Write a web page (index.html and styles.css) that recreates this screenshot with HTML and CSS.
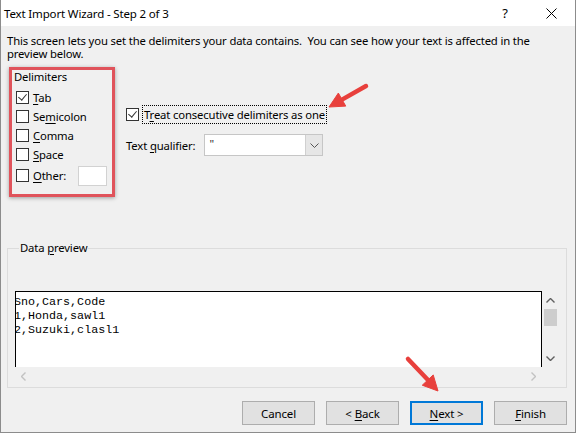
FILE: index.html
```html
<!DOCTYPE html>
<html>
<head>
  <meta charset="UTF-8">
  <link rel="stylesheet" href="styles.css">
</head>
<body>
  <div class="wizard">
    <div class="titlebar">
      <span class="title">Text Import Wizard - Step 2 of 3</span>
      <span class="title-btn">?</span>
      <span class="title-btn close">
        <svg width="11" height="11" viewBox="0 0 11 11"><path d="M0.5 0.5 L10.5 10.5 M10.5 0.5 L0.5 10.5" stroke="#000" stroke-width="1" fill="none"/></svg>
      </span>
    </div>

    <div class="content">
      <p class="intro">This screen lets you set the delimiters your data contains.&nbsp; You can see how your text is affected in the preview below.</p>

      <div class="options">
        <div class="delims">
          <div class="group-label">Delimiters</div>
          <div class="check-row"><span class="box checked"></span><span><u>T</u>ab</span></div>
          <div class="check-row"><span class="box"></span><span>Se<u>m</u>icolon</span></div>
          <div class="check-row"><span class="box"></span><span><u>C</u>omma</span></div>
          <div class="check-row"><span class="box"></span><span><u>S</u>pace</span></div>
          <div class="check-row other"><span class="box"></span><span><u>O</u>ther:</span><span class="other-input"></span></div>
        </div>

        <div class="side">
          <div class="check-row treat"><span class="box checked"></span><span class="focus">T<u>r</u>eat consecutive delimiters as one</span></div>
          <div class="qualifier-row">
            <span>Text <u>q</u>ualifier:</span>
            <div class="combo">
              <span class="combo-value">"</span>
              <span class="combo-btn">
                <svg width="9" height="5" viewBox="0 0 9 5"><path d="M0.5 0.5 L4.5 4.5 L8.5 0.5" stroke="#555" fill="none"/></svg>
              </span>
            </div>
          </div>
        </div>
      </div>

      <div class="preview-group">
        <div class="group-title">Data <u>p</u>review</div>
        <div class="preview">
          <div class="preview-text">
            <pre class="preview-lines">Sno,Cars,Code
1,Honda,sawl1
2,Suzuki,clasl1</pre>
          </div>
          <div class="vscroll">
            <span class="arrow"><svg width="9" height="5" viewBox="0 0 9 5"><path d="M0.5 4.5 L4.5 0.5 L8.5 4.5" stroke="#606060" stroke-width="1.4" fill="none"/></svg></span>
            <span class="thumb"></span>
            <span class="track"></span>
            <span class="arrow"><svg width="9" height="5" viewBox="0 0 9 5"><path d="M0.5 0.5 L4.5 4.5 L8.5 0.5" stroke="#606060" stroke-width="1.4" fill="none"/></svg></span>
          </div>
          <div class="hscroll">
            <span class="arrow"><svg width="5" height="9" viewBox="0 0 5 9"><path d="M4.5 0.5 L0.5 4.5 L4.5 8.5" stroke="#c2c2c2" stroke-width="1.4" fill="none"/></svg></span>
            <span class="arrow"><svg width="5" height="9" viewBox="0 0 5 9"><path d="M0.5 0.5 L4.5 4.5 L0.5 8.5" stroke="#c2c2c2" stroke-width="1.4" fill="none"/></svg></span>
          </div>
          <div class="corner"></div>
        </div>
      </div>

      <div class="buttons">
        <button class="btn">Cancel</button>
        <button class="btn">&lt; <u>B</u>ack</button>
        <button class="btn default"><u>N</u>ext &gt;</button>
        <button class="btn"><u>F</u>inish</button>
      </div>
    </div>

    <!-- red call-out arrows drawn over the dialog -->
    <svg class="annot" width="576" height="433" viewBox="0 0 576 433">
      <g fill="#e8403c" stroke="#e8403c">
        <line x1="365" y1="86" x2="341" y2="99.6" stroke-width="4.5" stroke-linecap="round"/>
        <polygon points="344.75,106.12 328,107 337.35,93.06" stroke-width="1" stroke-linejoin="round"/>
        <line x1="407" y1="359" x2="427" y2="380" stroke-width="4.5" stroke-linecap="round"/>
        <polygon points="421.28,385.19 437,391 432.22,374.95" stroke-width="1" stroke-linejoin="round"/>
      </g>
    </svg>
  </div>
</body>
</html>
```

FILE: styles.css
```css
body { margin: 0; font-family: "Noto Sans", "Open Sans", sans-serif; font-size: 11.3px; letter-spacing: -0.15px; color: #000; }
u { text-decoration: underline; text-underline-offset: 2px; }

.wizard { position: relative; width: 576px; height: 433px; box-sizing: border-box; border: 1px solid #8c8c8c; border-top: none; background: #f0f0f0; }
.titlebar { height: 26px; background: #fff; display: flex; align-items: center; padding-right: 1px; }
.title { flex: 1; padding-left: 3px; font-size: 11.5px; }
.title-btn { width: 46px; text-align: center; font-size: 13px; }
.title-btn.close { display: flex; justify-content: center; }

.content { padding: 8px 8px 0 6px; }
.intro { margin: 0; line-height: 13px; }

.options { display: flex; align-items: flex-start; margin: 7px 0 0 2px; }
.delims { width: 106px; height: 130px; box-sizing: border-box; border: 3px solid #e0535b; box-shadow: 0 1px 4px rgba(0, 0, 0, .35); padding: 0 5px 0 4px; }
.group-label { line-height: 14px; margin: 0 0 4px -2px; }
.check-row { display: flex; align-items: center; gap: 4px; height: 19px; }
.check-row.other { height: 23px; }
.box { width: 13px; height: 13px; box-sizing: border-box; border: 1px solid #333; background: #fff; flex: none; position: relative; }
.box.checked::after { content: ""; position: absolute; left: 3px; top: 0px; width: 4px; height: 7px; border: solid #333; border-width: 0 1.5px 1.5px 0; transform: rotate(40deg); }
.other-input { margin-left: auto; width: 29px; height: 20px; box-sizing: border-box; background: #fff; border: 1px solid #d2d2d2; }

.side { margin-left: 11px; padding-top: 38px; }
.check-row.treat { gap: 3px; }
.focus { border: 1px dotted #000; padding: 0 1px; line-height: 17px; }
.qualifier-row { display: flex; align-items: center; margin-top: 10px; height: 22px; }
.combo { width: 119px; height: 22px; box-sizing: border-box; border: 1px solid #c6c6c6; background: #fff; display: flex; margin-left: 9px; }
.combo-value { flex: 1; padding-left: 4px; color: #333; line-height: 18px; }
.combo-btn { width: 16px; background: #e6e6e6; border-left: 1px solid #d0d0d0; display: flex; align-items: center; justify-content: center; }

.preview-group { margin-top: 51px; border: 1px solid #dcdcdc; padding: 0 6px 1px 7px; }
.group-title { width: fit-content; margin: -8px 0 0 4px; padding: 0 1px; line-height: 14px; background: #f0f0f0; }
.preview { margin-top: 36px; display: grid; grid-template-columns: 527px 17px; grid-template-rows: 76px 19px; }
.preview-text { padding-top: 3px; border: 1px solid #000; border-bottom: none; background: #fff; overflow: hidden; }
.preview-lines { margin: 0 0 0 -2px; font-family: "Liberation Mono", "Courier New", monospace; font-size: 11.7px; line-height: 14px; letter-spacing: 0; }
.vscroll { display: flex; flex-direction: column; align-items: center; }
.vscroll .arrow { height: 18px; display: flex; align-items: center; justify-content: center; }
.thumb { width: 13px; height: 17px; background: #cdcdcd; }
.track { flex: 1; }
.hscroll { display: flex; justify-content: space-between; }
.hscroll .arrow { width: 17px; display: flex; align-items: center; justify-content: center; }

.buttons { display: flex; justify-content: flex-end; gap: 11px; margin-top: 13px; }
.btn { width: 73px; height: 24px; box-sizing: border-box; background: #e1e1e1; border: 1px solid #adadad; font-family: inherit; font-size: 11.5px; letter-spacing: -0.15px; color: #000; padding: 0; }
.btn.default { border: 2px solid #0078d7; }

.annot { position: absolute; left: 0; top: 0; pointer-events: none; }
```
